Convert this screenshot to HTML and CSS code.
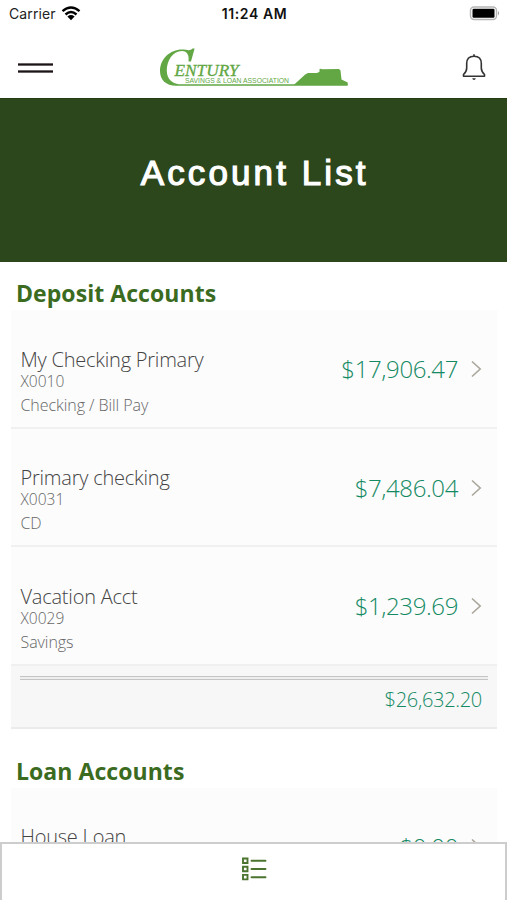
FILE: index.html
```html
<!DOCTYPE html>
<html lang="en">
<head>
<meta charset="utf-8">
<title>Account List</title>
<link rel="stylesheet" href="styles.css">
</head>
<body>
<div class="screen">
  <div class="status">
    <div class="carrier"><span>Carrier</span>
      <svg class="wifi" width="20" height="15" viewBox="0 0 20 15">
        <g fill="none" stroke="#000" stroke-width="2.4"><path d="M1.500 5.200Q10 -2 18.500 5.200"/><path d="M4.500 8.500Q10 3.600 15.500 8.500"/></g>
        <path d="M6.400 10.500Q10 7.700 13.600 10.500L10 14.200Z"/>
      </svg>
    </div>
    <div class="clock">11:24 AM</div>
    <svg class="battery" width="31" height="15" viewBox="0 0 31 15">
      <rect x="1.500" y="1" width="26" height="12.500" rx="3.500" fill="#fff" stroke="#b5b5b5" stroke-width="1.400"/>
      <rect x="3.500" y="2.800" width="22" height="9" rx="1.200"/>
      <path d="M29 5Q31 7.200 29 9.500Z" fill="#999"/>
    </svg>
  </div>
  <header class="header">
    <div class="menu"></div>
    <svg class="logo" width="190" height="40" viewBox="0 0 190 40">
      <path fill="#62a744" d="M35.600 0.500L32 13.500H29.500Q30.500 3 23 3C13 3 7.500 14 7.800 23C8 31 13 35.500 20 36.300H188.700V37.700H18C7 38 1 32 1 23C1 11 11 1.500 23 1.500C28 1.500 31 3.500 33.500 0.500Z"/>
      <path fill="#62a744" d="M134.700 37L146.200 26.500L149 25H158L160.500 23.800V21L162 20.800L163 21.300L180 21L181.500 22.500L182.500 31.500L188.700 34.500V37Z"/>
      <text class="logo-name" x="15.500" y="27.500" textLength="64" lengthAdjust="spacingAndGlyphs">ENTURY</text>
      <text class="logo-sub" x="26" y="35.300" textLength="104" lengthAdjust="spacingAndGlyphs">SAVINGS &amp; LOAN ASSOCIATION</text>
    </svg>
    <svg class="bell" width="24" height="28" viewBox="0 0 24 28">
      <g fill="none" stroke="#333" stroke-width="1.600" stroke-linejoin="round"><path d="M1.500 23.300H22.500V21.500Q19.300 18.500 19.300 15V10.500Q19.300 3.300 12 3.300Q4.700 3.300 4.700 10.500V15Q4.700 18.500 1.500 21.500Z"/><path d="M12 3.300V1.200"/></g>
      <path fill="#333" d="M10.200 25.200H13.800Q13.500 27 12 27Q10.500 27 10.200 25.200Z"/>
    </svg>
  </header>
  <div class="hero"><h1>Account List</h1></div>
  <main>
    <h2><span>Deposit Accounts</span></h2>
    <section class="list">
      <div class="row"><div class="info"><div class="name">My Checking Primary</div><div class="num">X0010</div><div class="kind">Checking / Bill Pay</div></div>
        <div class="amount">$17,906.47</div><svg class="chev" width="11" height="18" viewBox="0 0 11 18"><path d="M1 1.500L9.200 9L1 16.500"/></svg></div>
      <div class="row"><div class="info"><div class="name">Primary checking</div><div class="num">X0031</div><div class="kind">CD</div></div>
        <div class="amount">$7,486.04</div><svg class="chev" width="11" height="18" viewBox="0 0 11 18"><path d="M1 1.500L9.200 9L1 16.500"/></svg></div>
      <div class="row"><div class="info"><div class="name">Vacation Acct</div><div class="num">X0029</div><div class="kind">Savings</div></div>
        <div class="amount">$1,239.69</div><svg class="chev" width="11" height="18" viewBox="0 0 11 18"><path d="M1 1.500L9.200 9L1 16.500"/></svg></div>
      <div class="total"><div class="rule"></div><div class="sum">$26,632.20</div></div>
    </section>
    <h2 class="loans"><span>Loan Accounts</span></h2>
    <section class="list">
      <div class="row"><div class="info"><div class="name">House Loan</div></div>
        <div class="amount">$0.00</div><svg class="chev" width="11" height="18" viewBox="0 0 11 18"><path d="M1 1.500L9.200 9L1 16.500"/></svg></div>
    </section>
  </main>
  <nav class="tabs">
    <svg width="26" height="26" viewBox="0 0 26 26">
      <g fill="none" stroke="#4b7430" stroke-width="1.900"><path d="M2 2.500H6.500V7H2ZM2 10.700H6.500V15.200H2ZM2 18.900H6.500V23.400H2Z"/><path d="M10.500 4.800H24.500M10.500 13H24.500M10.500 21.200H24.500" stroke-linecap="round"/></g>
    </svg>
  </nav>
</div>
</body>
</html>
```

FILE: styles.css
```css
* { box-sizing: border-box; }
body { margin: 0; background: #fff; font-family: "Open Sans", sans-serif; }
h1, h2 { margin: 0; }
svg { display: block; flex: none; }
.screen { width: 507px; height: 900px; overflow: hidden; display: flex; flex-direction: column; }
.status { height: 28px; flex: none; display: grid; grid-template-columns: 1fr auto 1fr; align-items: center; padding: 0 7px 0 9px; font-family: Inter, sans-serif; font-size: 14px; line-height: 28px; color: #222; }
.carrier { display: flex; align-items: center; gap: 5px; }
.carrier span { letter-spacing: 0.1px; }
.wifi { margin-top: -2px; }
.clock { font-weight: 600; font-size: 14px; letter-spacing: 0.6px; color: #111; }
.battery { justify-self: end; margin-top: -1px; }
.header { height: 70px; flex: none; display: grid; grid-template-columns: 141px 190px 1fr; align-items: start; padding: 0 21px 0 18px; }
.menu { width: 35px; height: 10px; margin-top: 35px; background: linear-gradient(#6a6466 0 1px, #1c1518 1px 2px, #6a6466 2px 3px, #fff 3px 7px, #6a6466 7px 8px, #1c1518 8px 9px, #6a6466 9px 10px); margin-top: 62px; margin-top: 35px; }
.logo { margin-top: 20px; overflow: visible; }
.logo-name { font: italic 16.5px "Liberation Serif", serif; fill: #62a744; stroke: #62a744; stroke-width: 0.3px; }
.logo-sub { font: 8px "Liberation Sans", sans-serif; fill: #62a744; }
.bell { justify-self: end; margin-top: 25px; }
.hero { height: 164px; flex: none; background: #2d471c; border-top: 1px solid #233c12; display: flex; justify-content: center; padding-top: 52px; }
h1 { font: 400 35px/44px "Liberation Sans", sans-serif; letter-spacing: 3.1px; margin-right: -2.5px; color: #fff; -webkit-text-stroke: 1.2px #fff; }
main { flex: 1; min-height: 0; overflow: hidden; }
h2 { height: 48px; padding: 14px 16px 0; font-size: 23px; line-height: 34px; font-weight: 700; letter-spacing: 0.06px; color: #3b6b1f; }
.loans { height: 58.5px; padding-top: 25px; }
.list { margin: 0 10px 0 11px; }
.row { height: 118.5px; background: #fcfcfc; border-bottom: 2px solid #f0f0f0; display: flex; padding: 36.5px 15px 0 9.5px; color: #444; font-weight: 300; }
.info { flex: 1; }
.name { font-size: 20px; line-height: 26px; letter-spacing: -0.22px; }
.num { font-size: 15.5px; line-height: 16px; color: #666; }
.kind { font-size: 16px; line-height: 22px; margin-top: 5px; letter-spacing: -0.06px; color: #666; }
.amount { font-size: 24px; line-height: 30px; letter-spacing: -0.38px; margin: 7.5px 13px 0 0; color: #148a64; }
.chev { margin-top: 13.5px; fill: none; stroke: #aaa69b; stroke-width: 1.6px; }
.total { height: 63.5px; background: #f7f7f7; border-bottom: 2px solid #ebebeb; padding: 10px 9px 0; }
.rule { height: 4px; border-top: 1px solid #c4c4c4; border-bottom: 1px solid #c4c4c4; background: #eee; }
.sum { text-align: right; padding-right: 6px; margin-top: 6px; font-size: 20px; line-height: 28px; font-weight: 300; letter-spacing: -0.3px; color: #148a64; }
.tabs { height: 58px; flex: none; background: #fff; border: 2px solid #cdcdcd; border-bottom: 0; display: flex; justify-content: center; padding-top: 12px; }
```
